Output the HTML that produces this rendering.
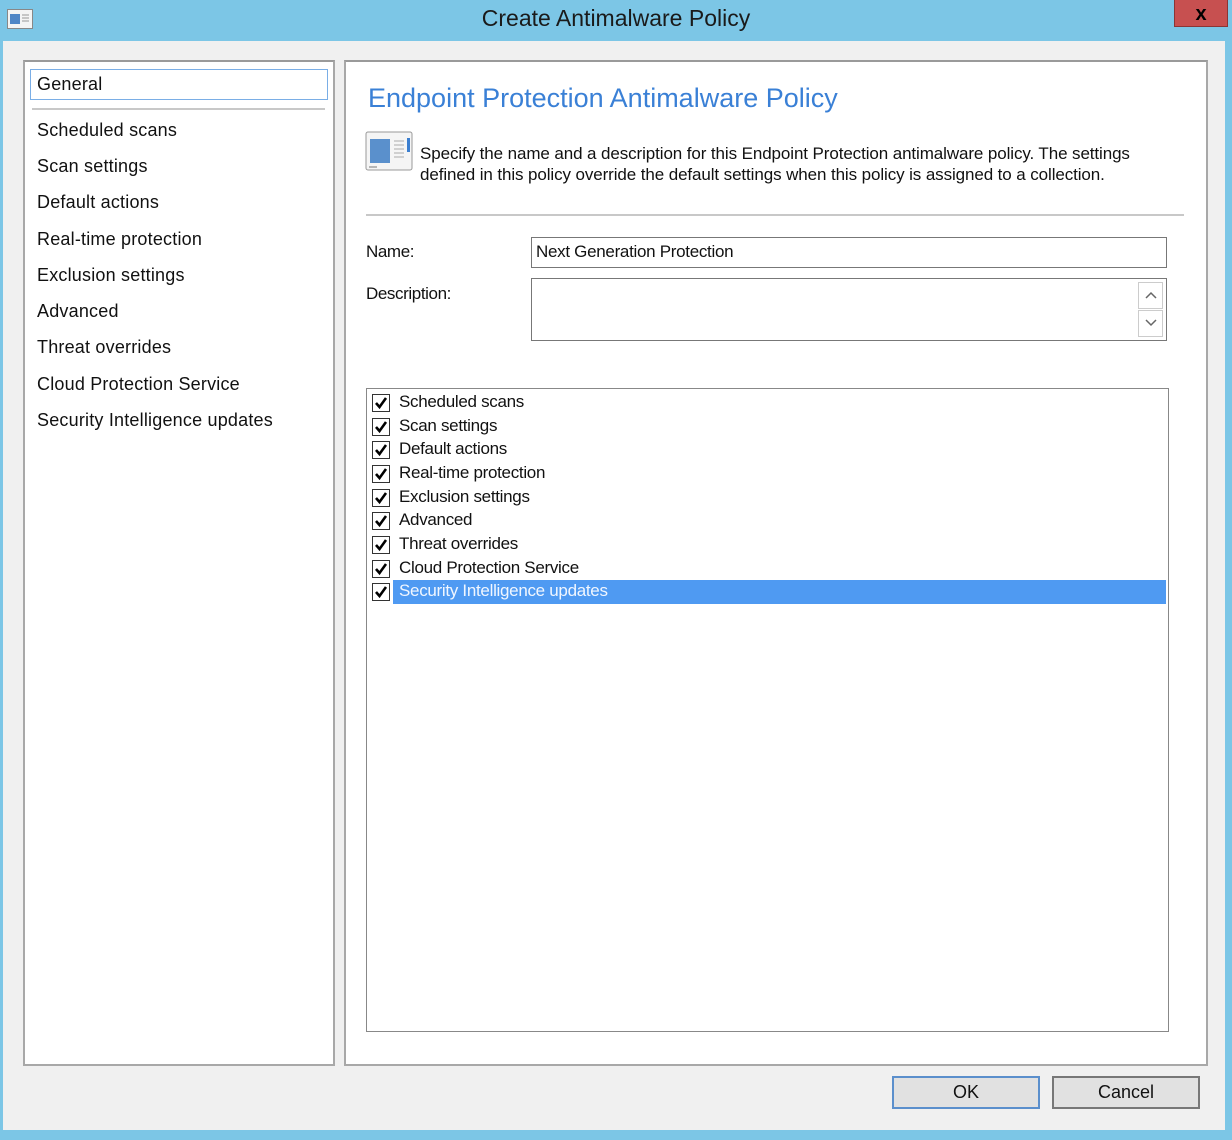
<!DOCTYPE html>
<html><head><meta charset="utf-8"><style>
*{margin:0;padding:0;box-sizing:border-box}
body{width:1232px;height:1140px;background:#7cc6e6;position:relative;overflow:hidden;font-family:"Liberation Sans",sans-serif;color:#111}
.a{position:absolute}
.title{left:0;top:5px;width:1232px;text-align:center;font-size:23px;color:#1a1a1a}
.close{left:1174px;top:0;width:54px;height:27px;background:#c75050;border:1px solid #8b3535;border-top:none;color:#000;font-weight:bold;font-size:20px;text-align:center;line-height:28px}
.bodyd{left:3px;top:41px;width:1222px;height:1089px;background:#f0f0f0}
.panel{background:#fff;border:2px solid #a8a8a8;border-top-color:#9a9a9a}
.nav{left:37px;font-size:18px;color:#111;letter-spacing:0.2px}
.cb{position:absolute;left:372px;width:18px;height:18px;border:1.5px solid #333;background:#fff}
.cb svg{position:absolute;left:1px;top:1px}
.it{position:absolute;left:399px;font-size:17px;letter-spacing:-0.3px}
.btn{background:#e1e1e1;border:2px solid #adadad;font-size:18px;text-align:center;line-height:28px}
</style></head><body>
<svg class="a" style="left:7px;top:9px" width="26" height="20"><rect x="0.5" y="0.5" width="25" height="19" fill="#f4f4f4" stroke="#888"/><rect x="3" y="5" width="10" height="10" fill="#4f86c6"/><path d="M15 6h7M15 9h7M15 12h7" stroke="#999"/></svg>
<div class="a title">Create Antimalware Policy</div>
<div class="a close">x</div>
<div class="a bodyd"></div>
<div class="a panel" style="left:23px;top:60px;width:312px;height:1006px"></div>
<div class="a" style="left:30px;top:69px;width:298px;height:31px;border:1.5px solid #7aaee6;background:#fff"></div>
<div class="a nav" style="top:74px">General</div>
<div class="a" style="left:32px;top:108px;width:293px;height:2px;background:#c8c8c8"></div>
<div class="a nav" style="top:120px">Scheduled scans</div>
<div class="a nav" style="top:156px">Scan settings</div>
<div class="a nav" style="top:192px">Default actions</div>
<div class="a nav" style="top:229px">Real-time protection</div>
<div class="a nav" style="top:265px">Exclusion settings</div>
<div class="a nav" style="top:301px">Advanced</div>
<div class="a nav" style="top:337px">Threat overrides</div>
<div class="a nav" style="top:374px">Cloud Protection Service</div>
<div class="a nav" style="top:410px">Security Intelligence updates</div>

<div class="a panel" style="left:344px;top:60px;width:864px;height:1006px"></div>
<div class="a" style="left:368px;top:83px;font-size:27px;color:#3a80d6">Endpoint Protection Antimalware Policy</div>
<svg class="a" style="left:365px;top:131px" width="48" height="42"><rect x="1" y="1" width="46" height="38" rx="2" fill="#f5f5f5" stroke="#999"/><rect x="5" y="8" width="20" height="24" fill="#5a90cc"/><path d="M29 10h10M29 14h10M29 18h10M29 22h10M29 26h10" stroke="#aaa"/><rect x="42" y="7" width="3" height="14" fill="#3b7fd0"/><path d="M4 36h8" stroke="#777"/></svg>
<div class="a" style="left:420px;top:143px;font-size:17px;line-height:21px;letter-spacing:-0.1px">Specify the name and a description for this Endpoint Protection antimalware policy. The settings<br>defined in this policy override the default settings when this policy is assigned to a collection.</div>
<div class="a" style="left:366px;top:214px;width:818px;height:2px;background:#c8c8c8"></div>
<div class="a" style="left:366px;top:242px;font-size:17px;letter-spacing:-0.4px">Name:</div>
<div class="a" style="left:531px;top:237px;width:636px;height:31px;border:1.5px solid #777;background:#fff;font-size:17px;padding:4px 0 0 4px;letter-spacing:-0.3px">Next Generation Protection</div>
<div class="a" style="left:366px;top:284px;font-size:17px;letter-spacing:-0.4px">Description:</div>
<div class="a" style="left:531px;top:278px;width:636px;height:63px;border:1.5px solid #777;background:#fff"></div>
<div class="a" style="left:1138px;top:282px;width:25px;height:27px;border:1px solid #ccc;background:#fff"></div>
<div class="a" style="left:1138px;top:310px;width:25px;height:27px;border:1px solid #ccc;background:#fff"></div>
<svg class="a" style="left:1144px;top:290px" width="14" height="40"><path d="M2 8l5-5 5 5M2 30l5 5 5-5" stroke="#666" stroke-width="1.5" fill="none"/></svg>

<div class="a" style="left:366px;top:388px;width:803px;height:644px;border:1.5px solid #888;background:#fff"></div>
<div class="a" style="left:393px;top:580px;width:773px;height:24px;background:#4f9af2"></div>
<div class="cb" style="top:394px"><svg width="14" height="14"><path d="M2 7l3.5 4L12 2" stroke="#000" stroke-width="2.6" fill="none"/></svg></div>
<div class="it" style="top:392px">Scheduled scans</div>
<div class="cb" style="top:418px"><svg width="14" height="14"><path d="M2 7l3.5 4L12 2" stroke="#000" stroke-width="2.6" fill="none"/></svg></div>
<div class="it" style="top:416px">Scan settings</div>
<div class="cb" style="top:441px"><svg width="14" height="14"><path d="M2 7l3.5 4L12 2" stroke="#000" stroke-width="2.6" fill="none"/></svg></div>
<div class="it" style="top:439px">Default actions</div>
<div class="cb" style="top:465px"><svg width="14" height="14"><path d="M2 7l3.5 4L12 2" stroke="#000" stroke-width="2.6" fill="none"/></svg></div>
<div class="it" style="top:463px">Real-time protection</div>
<div class="cb" style="top:489px"><svg width="14" height="14"><path d="M2 7l3.5 4L12 2" stroke="#000" stroke-width="2.6" fill="none"/></svg></div>
<div class="it" style="top:487px">Exclusion settings</div>
<div class="cb" style="top:512px"><svg width="14" height="14"><path d="M2 7l3.5 4L12 2" stroke="#000" stroke-width="2.6" fill="none"/></svg></div>
<div class="it" style="top:510px">Advanced</div>
<div class="cb" style="top:536px"><svg width="14" height="14"><path d="M2 7l3.5 4L12 2" stroke="#000" stroke-width="2.6" fill="none"/></svg></div>
<div class="it" style="top:534px">Threat overrides</div>
<div class="cb" style="top:560px"><svg width="14" height="14"><path d="M2 7l3.5 4L12 2" stroke="#000" stroke-width="2.6" fill="none"/></svg></div>
<div class="it" style="top:558px">Cloud Protection Service</div>
<div class="cb" style="top:583px"><svg width="14" height="14"><path d="M2 7l3.5 4L12 2" stroke="#000" stroke-width="2.6" fill="none"/></svg></div>
<div class="it" style="top:581px;color:#f0f6ff">Security Intelligence updates</div>

<div class="a btn" style="left:892px;top:1076px;width:148px;height:33px;border-color:#5b8fcc">OK</div>
<div class="a btn" style="left:1052px;top:1076px;width:148px;height:33px;border-color:#777">Cancel</div>
</body></html>
